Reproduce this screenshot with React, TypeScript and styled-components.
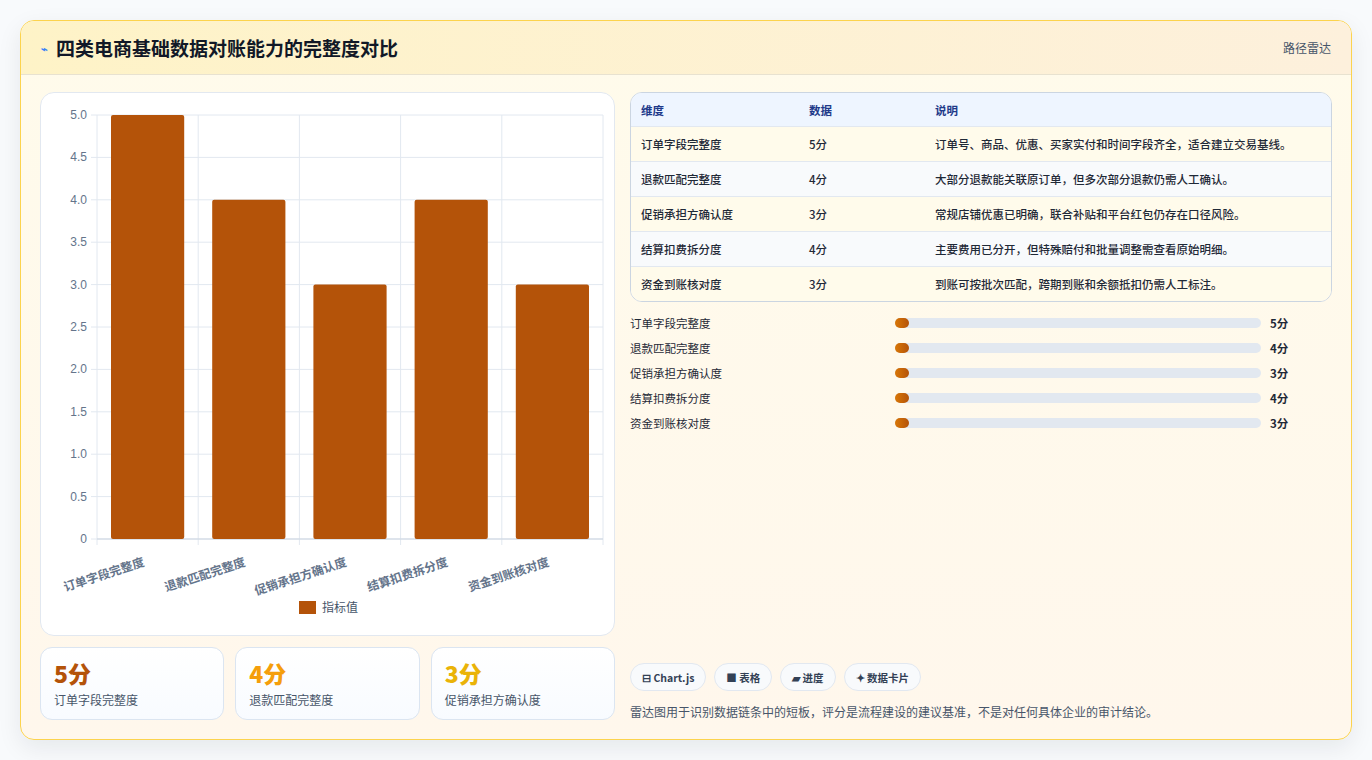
import React from "react";
import styled, { createGlobalStyle } from "styled-components";

const Global = createGlobalStyle`
  html, body { margin: 0; padding: 0; background: #f8fafc; }
  body { font-family: "Noto Sans CJK SC", "Noto Sans", sans-serif; }
`;

const Page = styled.div`
  width: 1372px; height: 760px; box-sizing: border-box; padding: 20px 20px 0 20px;
`;
const Card = styled.div`
  height: 720px; box-sizing: border-box; border: 1px solid #fcd34d; border-radius: 14px;
  background: linear-gradient(180deg, #fffbeb 0%, #fff7ec 100%);
  box-shadow: 0 8px 24px rgba(15,23,42,0.08); overflow: hidden; display: flex; flex-direction: column;
`;
const Header = styled.div`
  height: 55px; box-sizing: border-box; display: flex; align-items: center; justify-content: space-between;
  padding: 0 20px; background: linear-gradient(90deg, #fef3c7, #fdf0dc);
  border-bottom: 1px solid #e8e2d0;
`;
const Title = styled.h1`
  margin: 0; font-size: 19px; font-weight: 700; color: #111827; display: flex; align-items: center; gap: 8px;
`;
const Icon = styled.span` font-size: 11px; color: #3b82f6; `;
const HeaderTag = styled.span` font-size: 12px; color: #475569; `;
const Body = styled.div`
  flex: 1; display: grid; grid-template-columns: 575px 1fr; gap: 15px; padding: 17px 19px 19px 19px;
`;
const Left = styled.div` display: flex; flex-direction: column; gap: 11px; `;
const ChartCard = styled.div`
  height: 544px; box-sizing: border-box; background: #fff; border: 1px solid #e2e8f0; border-radius: 14px; overflow: hidden;
`;
const Stats = styled.div` display: grid; grid-template-columns: repeat(3, 1fr); gap: 11px; `;
const Stat = styled.div`
  height: 73px; box-sizing: border-box; padding: 10px 13px; border: 1px solid #dbe5f1; border-radius: 12px;
  background: linear-gradient(180deg, #fff, #f8fbff);
`;
const StatVal = styled.div<{ c: string }>` font-size: 23px; font-weight: 800; color: ${p => p.c}; line-height: 30px; `;
const StatLabel = styled.div` font-size: 12px; color: #475569; margin-top: 3px; `;
const Right = styled.div` display: flex; flex-direction: column; `;
const Table = styled.div`
  border: 1px solid #cbd5e1; border-radius: 12px; overflow: hidden; background: #fff;
`;
const Row = styled.div<{ head?: boolean; alt?: boolean }>`
  display: grid; grid-template-columns: 168px 126px 1fr; height: ${p => p.head ? 33 : 35}px; align-items: center;
  padding: 0 10px; font-size: 11.5px; font-weight: ${p => p.head ? 700 : 500};
  color: ${p => p.head ? "#1e3a8a" : "#1f2937"};
  background: ${p => p.head ? "#eef5ff" : p.alt ? "#f8fafc" : "#fffbeb"};
  border-top: ${p => p.head ? "none" : "1px solid #e2e8f0"};
  box-sizing: border-box;
`;
const Bars = styled.div` display: flex; flex-direction: column; gap: 7px; margin-top: 12px; `;
const BarRow = styled.div`
  display: grid; grid-template-columns: 265px 366px 1fr; align-items: center; height: 18px; font-size: 11.5px; color: #1f2937;
`;
const Track = styled.div` height: 10px; border-radius: 5px; background: #e2e8f0; position: relative; `;
const Fill = styled.div`
  height: 10px; border-radius: 5px; background: linear-gradient(90deg, #d97706, #b45309);
`;
const Val = styled.span` font-weight: 700; margin-left: 9px; color: #1f2937; `;
const Spacer = styled.div` flex: 1; `;
const Chips = styled.div` display: flex; gap: 8px; `;
const Chip = styled.span`
  height: 28px; box-sizing: border-box; padding: 0 11px; border: 1px solid #e2e8f0; border-radius: 14px; background: #f8fafc;
  display: inline-flex; align-items: center; gap: 4px; font-size: 10.5px; font-weight: 700; color: #334155;
`;
const Note = styled.p` margin: 12px 0 0 0; font-size: 12px; color: #475569; `;

const cats = ["订单字段完整度", "退款匹配完整度", "促销承担方确认度", "结算扣费拆分度", "资金到账核对度"];
const vals = [5, 4, 3, 4, 3];
const notes = [
  "订单号、商品、优惠、买家实付和时间字段齐全，适合建立交易基线。",
  "大部分退款能关联原订单，但多次部分退款仍需人工确认。",
  "常规店铺优惠已明确，联合补贴和平台红包仍存在口径风险。",
  "主要费用已分开，但特殊赔付和批量调整需查看原始明细。",
  "到账可按批次匹配，跨期到账和余额抵扣仍需人工标注。",
];

function Chart() {
  const x0 = 56, x1 = 562, y0 = 22, y1 = 446;
  const cw = (x1 - x0) / 5;
  const ticks = [0, 0.5, 1, 1.5, 2, 2.5, 3, 3.5, 4, 4.5, 5];
  const yv = (v: number) => y1 - (v / 5) * (y1 - y0);
  return (
    <svg width="574" height="542" style={{ display: "block" }}>
      {ticks.map(t => (
        <g key={t}>
          <line x1={x0 - 6} x2={x1} y1={yv(t)} y2={yv(t)} stroke="#e2e8f0" />
          <text x={x0 - 10} y={yv(t) + 4} textAnchor="end" fontSize="12" fill="#64748b" fontFamily="Liberation Sans, sans-serif">{t === 0 ? "0" : t.toFixed(1)}</text>
        </g>
      ))}
      {[0, 1, 2, 3, 4, 5].map(i => (
        <line key={i} x1={x0 + i * cw} x2={x0 + i * cw} y1={y0} y2={y1 + 6} stroke="#e2e8f0" />
      ))}
      <line x1={x0} x2={x1} y1={y1} y2={y1} stroke="#cbd5e1" />
      {vals.map((v, i) => (
        <rect key={i} x={x0 + i * cw + 14} y={yv(v)} width={cw - 28} height={y1 - yv(v)} fill="#b45309" rx="2" />
      ))}
      {cats.map((c, i) => (
        <text key={c} transform={`translate(${x0 + i * cw + cw / 2 - 6},${y1 + 16}) rotate(-18)`} textAnchor="end" dominantBaseline="hanging"
          fontSize="12" fontWeight="700" fill="#64748b">{c}</text>
      ))}
      <rect x="258" y="508" width="17" height="13" fill="#b45309" />
      <text x="281" y="519" fontSize="12" fill="#475569">指标值</text>
    </svg>
  );
}

export default function App() {
  return (
    <Page>
      <Global />
      <Card>
        <Header>
          <Title><Icon>⌁</Icon>四类电商基础数据对账能力的完整度对比</Title>
          <HeaderTag>路径雷达</HeaderTag>
        </Header>
        <Body>
          <Left>
            <ChartCard><Chart /></ChartCard>
            <Stats>
              <Stat><StatVal c="#b45309">5分</StatVal><StatLabel>订单字段完整度</StatLabel></Stat>
              <Stat><StatVal c="#f59e0b">4分</StatVal><StatLabel>退款匹配完整度</StatLabel></Stat>
              <Stat><StatVal c="#eab308">3分</StatVal><StatLabel>促销承担方确认度</StatLabel></Stat>
            </Stats>
          </Left>
          <Right>
            <Table>
              <Row head><span>维度</span><span>数据</span><span>说明</span></Row>
              {cats.map((c, i) => (
                <Row key={c} alt={i % 2 === 1}><span>{c}</span><span>{vals[i]}分</span><span>{notes[i]}</span></Row>
              ))}
            </Table>
            <Bars>
              {cats.map((c, i) => (
                <BarRow key={c}>
                  <span>{c}</span>
                  <Track><Fill style={{ width: `${vals[i] * 0.75}%`, minWidth: 14 }} /></Track>
                  <Val>{vals[i]}分</Val>
                </BarRow>
              ))}
            </Bars>
            <Spacer />
            <Chips>
              <Chip>⊟ Chart.js</Chip>
              <Chip>■ 表格</Chip>
              <Chip>▰ 进度</Chip>
              <Chip>✦ 数据卡片</Chip>
            </Chips>
            <Note>雷达图用于识别数据链条中的短板，评分是流程建设的建议基准，不是对任何具体企业的审计结论。</Note>
          </Right>
        </Body>
      </Card>
    </Page>
  );
}
